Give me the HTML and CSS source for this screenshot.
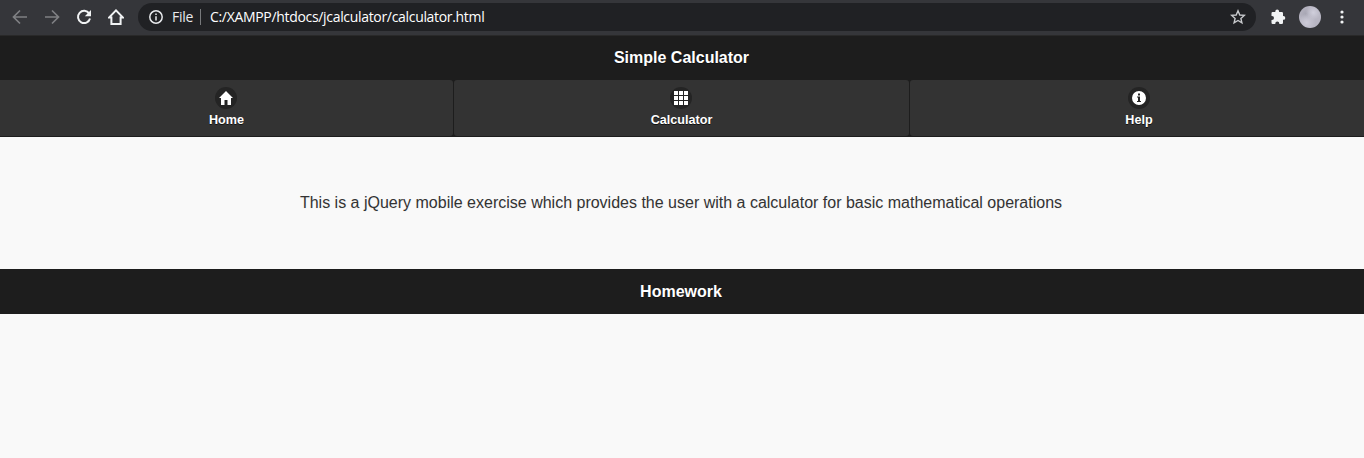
FILE: index.html
```html
<!DOCTYPE html>
<html lang="en">
<head>
<meta charset="utf-8">
<title>Simple Calculator</title>
<link rel="stylesheet" href="styles.css">
</head>
<body>
<div class="toolbar">
  <svg class="tool dim" viewBox="0 0 16 16"><path d="M15 8H2M8 1.5L1.5 8L8 14.5"/></svg>
  <svg class="tool dim" viewBox="0 0 16 16"><path d="M1 8H14M8 1.5L14.5 8L8 14.5"/></svg>
  <svg class="tool" viewBox="0 0 16 16"><path d="M13.2 4.6A6.1 6.1 0 1 0 14 9.5"/><path class="solid" d="M15 1V7.2H8.8Z"/></svg>
  <svg class="tool" viewBox="0 0 16 16"><path d="M1 8.6H3.4V15H12.6V8.6H15L8 1.4Z"/></svg>
  <div class="address">
    <svg class="info" viewBox="0 0 14 14"><circle cx="7" cy="7" r="6.2"/><path d="M7 6.2V10.5M7 3.4V5"/></svg>
    <span class="scheme">File</span>
    <span class="url">C:/XAMPP/htdocs/jcalculator/calculator.html</span>
    <svg class="star" viewBox="0 0 16 16"><path d="M8 1.8L9.8 6L14.3 6.4L10.9 9.4L11.9 13.8L8 11.5L4.1 13.8L5.1 9.4L1.7 6.4L6.2 6Z"/></svg>
  </div>
  <svg class="puzzle" viewBox="0 0 16 16"><path d="M1.5 4.2Q1.5 3 2.7 3H5.3V2.5A1.9 1.9 0 0 1 9.1 2.5V3H11.8Q13 3 13 4.2V7H13.4A1.9 1.9 0 0 1 13.4 10.8H13V13.8Q13 15 11.8 15H9.3V14.5A2 2 0 0 0 5.3 14.5V15H2.7Q1.5 15 1.5 13.8V11H2A2 2 0 0 0 2 7H1.5Z"/></svg>
  <div class="avatar"></div>
  <svg class="more" viewBox="0 0 4 14"><circle cx="2" cy="2" r="1.6"/><circle cx="2" cy="7" r="1.6"/><circle cx="2" cy="12" r="1.6"/></svg>
</div>
<header class="bar header"><h1>Simple Calculator</h1></header>
<nav class="nav">
  <a class="tab">
    <span class="disc"><svg viewBox="0 0 14 14"><path d="M7 0L0 7H2V14H5.5V9H8.5V14H12V7H14Z"/></svg></span>
    <span>Home</span>
  </a>
  <a class="tab">
    <span class="disc"><svg viewBox="0 0 14 14"><path d="M0 0H4V4H0ZM5 0H9V4H5ZM10 0H14V4H10ZM0 5H4V9H0ZM5 5H9V9H5ZM10 5H14V9H10ZM0 10H4V14H0ZM5 10H9V14H5ZM10 10H14V14H10Z"/></svg></span>
    <span>Calculator</span>
  </a>
  <a class="tab">
    <span class="disc"><svg viewBox="0 0 14 14"><path fill-rule="evenodd" d="M7 0A7 7 0 1 0 7 14A7 7 0 1 0 7 0ZM6 2.5H8V4.5H6ZM5 5.5H8V10H9V11H5V10H6V6.5H5Z"/></svg></span>
    <span>Help</span>
  </a>
</nav>
<main class="content"><p>This is a jQuery mobile exercise which provides the user with a calculator for basic mathematical operations</p></main>
<footer class="bar footer"><h1>Homework</h1></footer>
</body>
</html>
```
FILE: styles.css
```css
* { box-sizing: border-box; }
body {
  margin: 0;
  background: #f9f9f9;
  font-family: "Liberation Sans", Arial, sans-serif;
  color: #333;
}
svg { display: block; flex: none; }
.toolbar {
  display: flex;
  align-items: center;
  height: 36px;
  padding: 0 20px 2px 12px;
  background: #35363a;
  border-bottom: 1px solid #292929;
}
.tool {
  width: 16px;
  height: 16px;
  margin-right: 16px;
  fill: none;
  stroke: #f1f3f4;
  stroke-width: 2;
}
.dim { stroke: #7f8083; stroke-width: 1.7; }
.solid { fill: #f1f3f4; stroke: none; }
.address {
  display: flex;
  align-items: center;
  width: 1118px;
  height: 28px;
  margin-left: -2px;
  padding: 0 10px 0 11px;
  border-radius: 14px;
  background: #202124;
  color: #fff;
  font: 14px/20px "Open Sans", "Noto Sans", sans-serif;
}
.info {
  width: 14px;
  height: 14px;
  fill: none;
  stroke: #e8eaed;
  stroke-width: 1.5;
}
.scheme {
  width: 29px;
  margin-left: 9px;
  padding-right: 7px;
  border-right: 1px solid #77797c;
  line-height: 16px;
  letter-spacing: -0.3px;
  color: #e8eaed;
}
.url { margin-left: 9px; white-space: nowrap; letter-spacing: -0.32px; }
.star {
  width: 16px;
  height: 16px;
  margin-left: auto;
  fill: none;
  stroke: #c8cacd;
  stroke-width: 1.4;
}
.puzzle { width: 16px; height: 16px; margin-left: 14px; fill: #f1f3f4; }
.avatar {
  width: 22px;
  height: 22px;
  margin-left: 13px;
  border-radius: 50%;
  background:
    radial-gradient(circle at 65% 30%, #d0cfdc 0, transparent 35%),
    radial-gradient(circle at 35% 75%, #cdcbd8 0, transparent 40%),
    radial-gradient(circle at 30% 35%, #a8a7b4 0, transparent 40%),
    #b8b6c3;
}
.more { width: 4px; height: 14px; margin-left: 19px; fill: #f1f3f4; }
.bar {
  display: flex;
  justify-content: center;
  align-items: center;
  background: #1d1d1d;
  color: #fff;
  text-shadow: 0 1px 0 #111;
}
.bar h1 { margin: 0; font-size: 16px; line-height: 20px; }
.header { height: 44px; padding-right: 1px; }
.nav {
  display: grid;
  grid-template-columns: 453px 455px 454px;
  gap: 1px;
  height: 57px;
  padding-bottom: 1px;
  background: #1d1d1d;
}
.tab {
  display: flex;
  flex-direction: column;
  align-items: center;
  padding-top: 7px;
  border-radius: 3px;
  background: #333;
  color: #fff;
  font-size: 12.6px;
  font-weight: bold;
  line-height: 22px;
  text-shadow: 0 1px 0 #111;
}
.tab:first-child { border-radius: 0 3px 3px 0; }
.tab:last-child { border-radius: 3px 0 0 3px; padding-left: 4px; }
.disc {
  display: grid;
  place-items: center;
  width: 22px;
  height: 22px;
  margin-right: 1px;
  border-radius: 50%;
  background: #242424;
}
.tab:last-child .disc { margin-right: 0; }
.disc svg { width: 14px; height: 14px; fill: #fff; }
.content {
  display: flex;
  justify-content: center;
  align-items: center;
  height: 132px;
  padding-right: 2px;
  font-size: 16px;
}
.content p { margin: 0; line-height: 20px; text-shadow: 0 1px 0 #f3f3f3; }
.footer { height: 45px; padding-right: 2px; }
```
